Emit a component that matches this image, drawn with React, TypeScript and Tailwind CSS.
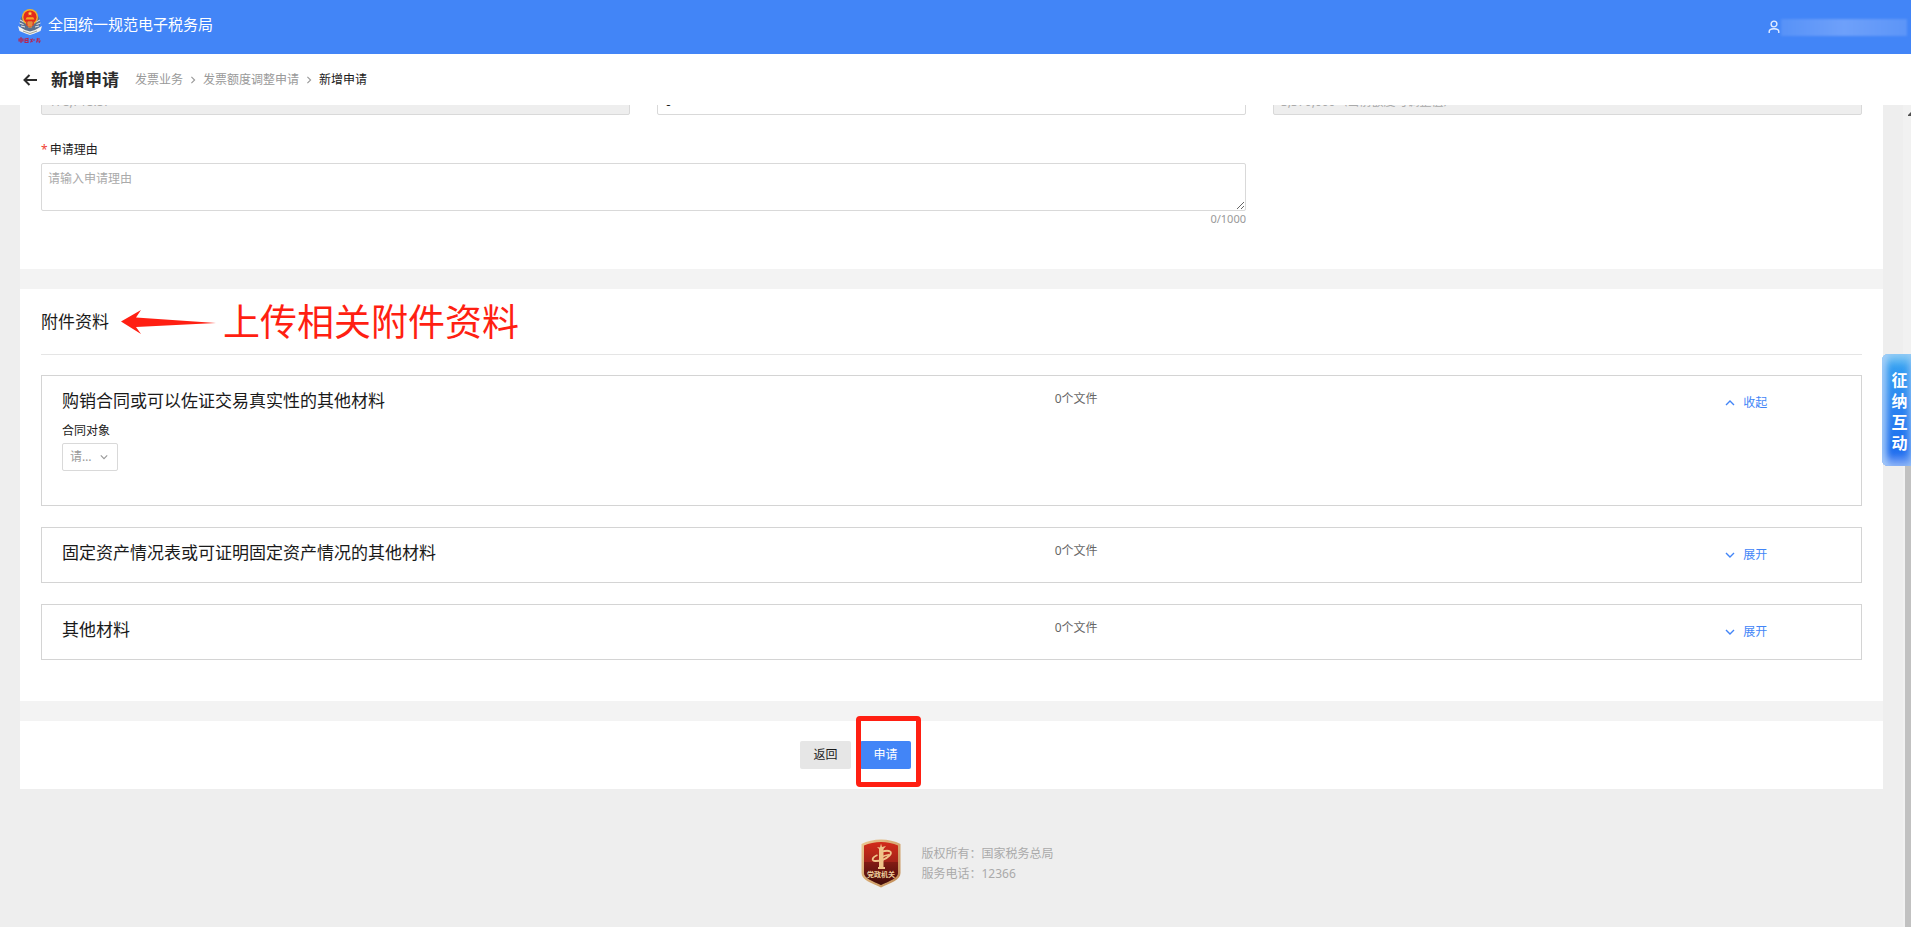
import { useState } from "react";
import type { ReactNode } from "react";

type Material = {
  id: string;
  title: string;
  files: number;
};

const MATERIALS: Material[] = [
  { id: "contract", title: "购销合同或可以佐证交易真实性的其他材料", files: 0 },
  { id: "assets", title: "固定资产情况表或可证明固定资产情况的其他材料", files: 0 },
  { id: "other", title: "其他材料", files: 0 },
];

function TaxEmblem() {
  return (
    <svg viewBox="0 0 26 36" className="h-9 w-[26px] shrink-0" aria-hidden="true">
      <path d="M5 8C1 14 3 20 8 24l5 2 5-2c5-4 7-10 3-16" fill="#5d6f8c" />
      <path d="M3 12l4 2M2.5 15l4 1.5M4 18l4 1M23 12l-4 2M23.5 15l-4 1.5M22 18l-4 1" stroke="#e4e6e8" />
      <circle cx="13" cy="9" r="8" fill="#f3b22c" />
      <circle cx="13" cy="9" r="6.6" fill="#e3291c" />
      <path d="M13 3.2l.7 1.5 1.6.1-1.2 1 .4 1.6-1.5-.9-1.5.9.4-1.6-1.2-1 1.6-.1z" fill="#ffd54a" />
      <path d="M8.5 11.5h9l-1.3-2.3H9.8z" fill="#f6a623" />
      <path d="M9 13h8v4l-4 3-4-3z" fill="#d8402a" />
      <path d="M10 15h6M10.5 17h5M12 13v7M14 13v7" stroke="#f4c04a" strokeWidth=".7" />
      <path d="M1 18l7 4 5 1.5 5-1.5 7-4-1.5 5-6 2.5L13 27l-4.5-1.5-6-2.5z" fill="#f3f2ee" />
      <path d="M6 23l7 2.5 7-2.5" fill="none" stroke="#8c8c7c" strokeWidth=".8" />
      <path
        d="M2 31h4v2H2zM4 29v6M8 31l3-.5v4H8zM8 32.5h3M13.5 31l2 3M15.5 30.5l-2 4M16 32h2M19.5 31H23M21 30l-1.5 4.5M20 33h3l-1 2"
        fill="none"
        stroke="#b52552"
        strokeWidth="1.1"
      />
    </svg>
  );
}

function AgencyBadge() {
  return (
    <svg viewBox="0 0 40 49" className="h-[49px] w-10 shrink-0" role="img" aria-label="党政机关">
      <defs>
        <linearGradient id="shield" x1="0" y1="0" x2="0" y2="1">
          <stop offset="0" stopColor="#d32b1a" />
          <stop offset=".45" stopColor="#a5241a" />
          <stop offset="1" stopColor="#3c0b0a" />
        </linearGradient>
        <linearGradient id="rim" x1="0" y1="0" x2="1" y2="1">
          <stop offset="0" stopColor="#ecc892" />
          <stop offset="1" stopColor="#c08a55" />
        </linearGradient>
      </defs>
      <path d="M20 .5C27 .7 34 2 39.5 5v29c0 7-10 10-19.5 14.5C10.500 44 .5 41 .5 34V5C6 2 13 .7 20 .5z" fill="url(#rim)" />
      <path d="M20 3c6 .1 12 1.2 17 3.5V34c0 5-8.500 8-17 12C11.500 42 3 39 3 34V6.500C8 4.200 14 3.100 20 3z" fill="url(#shield)" />
      <path d="M3 23h34v11c0 5-8.500 8-17 12C11.500 42 3 39 3 34z" fill="#4b0f0c" opacity=".35" />
      <path d="M18 10l-2-2 3 .5L20 4.500l1 3.500 4-1-2.500 3v18H24v2h-7v-2h1z" fill="#efc48a" />
      <path d="M21 12.500c8-2 11 .5 7.500 4-3 3-9 5.500-14 5.500-4.500 0-3.500-4 2-6" fill="none" stroke="#efc48a" strokeWidth="1.8" />
      <path d="M22 17.500c3-1.500 4-1 6-2" fill="none" stroke="#efc48a" strokeWidth="1.4" />
      <text x="20" y="38" textAnchor="middle" fontSize="7" fontWeight="700" fill="#efcf9e">
        党政机关
      </text>
    </svg>
  );
}

const CHEVRON_PATH = {
  up: "M1 7l4-4 4 4",
  down: "M1 3l4 4 4-4",
  right: "M3 1l4 4-4 4",
};

function Chevron({ dir, className }: { dir: keyof typeof CHEVRON_PATH; className: string }) {
  return (
    <svg viewBox="0 0 10 10" className={`shrink-0 ${className}`} fill="none" stroke="currentColor" strokeWidth="1.4" aria-hidden="true">
      <path d={CHEVRON_PATH[dir]} />
    </svg>
  );
}

function TopBar() {
  return (
    <header className="flex h-[54px] shrink-0 items-center justify-between bg-[#4285f7] pl-[17px] text-white">
      <div className="flex items-center gap-[5px] pb-[3px]">
        <TaxEmblem />
        <span className="pb-[3px] text-[15px] leading-5">全国统一规范电子税务局</span>
      </div>
      <div className="flex items-center gap-px pr-1">
        <svg viewBox="0 0 12 14" className="h-[14px] w-3" fill="none" stroke="#e3edff" strokeWidth="1.4" role="img" aria-label="用户">
          <circle cx="6" cy="4" r="2.9" />
          <path d="M1.200 13v-1.500C1.200 9.500 3 8.700 6 8.700s4.800.8 4.800 2.800V13" />
        </svg>
        <span className="h-[17px] w-[126px] bg-linear-to-r from-[#5792f8] via-[#6ea0fa] to-[#5c95f8] blur-[1px]" />
      </div>
    </header>
  );
}

function PageHeading() {
  return (
    <div className="flex h-[51px] shrink-0 items-center bg-white pt-px pl-[23px]">
      <button type="button" aria-label="返回上一页" className="text-[#2b2b2b]">
        <svg viewBox="0 0 14 12" className="h-3 w-[14px]" fill="none" stroke="currentColor" strokeWidth="2" aria-hidden="true">
          <path d="M6.500 1L1.500 6l5 5M1.500 6H14" />
        </svg>
      </button>
      <h1 className="ml-[14px] text-[17px] leading-6 font-bold text-[#2b2b2b]">新增申请</h1>
      <nav className="ml-4 flex items-center gap-[6px] text-xs text-[#999]">
        <a href="#invoice">发票业务</a>
        <Chevron dir="right" className="size-2" />
        <a href="#quota">发票额度调整申请</a>
        <Chevron dir="right" className="size-2" />
        <span className="text-[#1a1a1a]">新增申请</span>
      </nav>
    </div>
  );
}

function QuotaForm() {
  const [reason, setReason] = useState("");
  const field = "h-7 w-full rounded-[2px] border border-[#d9d9d9] px-[7px] text-xs";

  return (
    <section className="bg-white px-[21px] pb-[42px]">
      <div className="grid grid-cols-3 gap-x-[27px]">
        <input aria-label="当前额度" disabled defaultValue="178,718.87" className={`${field} bg-[#eee] text-[#aaa]`} />
        <input aria-label="申请额度" defaultValue="0" className={`${field} bg-white text-[#1a1a1a]`} />
        <input aria-label="调整后额度" disabled defaultValue="3,370,000（当前额度可调整值）" className={`${field} bg-[#eee] text-[#aaa]`} />
        <div className="col-span-2 pt-[25px]">
          <label htmlFor="reason" className="flex h-5 items-center gap-[2px] text-xs text-[#1a1a1a]">
            <span className="text-[#f04134]">*</span>
            申请理由
          </label>
          <textarea
            id="reason"
            value={reason}
            maxLength={1000}
            onChange={(e) => setReason(e.target.value)}
            placeholder="请输入申请理由"
            className="mt-[3px] block h-12 w-full rounded-[2px] border border-[#d9d9d9] px-[6px] py-[5px] text-xs leading-5 placeholder:text-[#aaa]"
          />
          <div className="text-right text-[11px] leading-4 text-[#999]">{reason.length}/1000</div>
        </div>
      </div>
    </section>
  );
}

type MaterialCardProps = {
  item: Material;
  open: boolean;
  onToggle: () => void;
  children?: ReactNode;
};

function MaterialCard({ item, open, onToggle, children }: MaterialCardProps) {
  return (
    <div className={`border border-[#d4d4d4] px-5 pt-[11px] ${open ? "pb-[34px]" : "pb-[11px]"}`}>
      <div className="flex items-start">
        <h3 className="w-[55.8%] text-[17px] leading-7 text-[#1a1a1a]">{item.title}</h3>
        <span className="w-[37.7%] text-xs leading-6 text-[#666]">{item.files}个文件</span>
        <button type="button" aria-expanded={open} onClick={onToggle} className="flex items-center gap-2 text-xs leading-8 whitespace-nowrap text-[#4285f7]">
          <Chevron dir={open ? "up" : "down"} className="size-[10px]" />
          {open ? "收起" : "展开"}
        </button>
      </div>
      {open && children}
    </div>
  );
}

function ContractTarget() {
  return (
    <div className="flex flex-col items-start">
      <label htmlFor="target" className="text-xs leading-6 text-[#1a1a1a]">
        合同对象
      </label>
      <div className="relative">
        <select id="target" className="h-7 w-14 appearance-none overflow-hidden rounded-[2px] border border-[#d9d9d9] bg-white pr-5 pl-[7px] text-xs text-ellipsis whitespace-nowrap text-[#999]">
          <option>请选择</option>
          <option>购方</option>
          <option>销方</option>
        </select>
        <Chevron dir="down" className="pointer-events-none absolute top-[10px] right-[10px] size-2 text-[#999]" />
      </div>
    </div>
  );
}

function Attachments() {
  const [openId, setOpenId] = useState<string | null>("contract");

  return (
    <section className="bg-white px-[21px] pb-[41px]">
      <div className="flex h-[66px] items-center border-b border-[#e5e5e5]">
        <h2 className="text-[17px] leading-6 text-[#1a1a1a]">附件资料</h2>
        <svg viewBox="0 0 95 24" className="ml-3 h-6 w-[95px] shrink-0" aria-hidden="true">
          <path d="M0 11.500L20 0l-5 7.500L95 13l-80 4 5 7z" fill="#ff1f12" />
        </svg>
        <span className="ml-[7px] text-[37px] leading-[48px] whitespace-nowrap text-[#ff1f12]">上传相关附件资料</span>
      </div>
      <div className="flex flex-col gap-[21px] pt-5">
        {MATERIALS.map((m) => (
          <MaterialCard key={m.id} item={m} open={openId === m.id} onToggle={() => setOpenId(openId === m.id ? null : m.id)}>
            <ContractTarget />
          </MaterialCard>
        ))}
      </div>
    </section>
  );
}

function Actions() {
  return (
    <section className="flex justify-center gap-[9px] bg-white py-5 pr-48">
      <button type="button" className="h-7 w-[51px] rounded-[2px] bg-[#e6e6e6] text-xs text-[#1a1a1a]">
        返回
      </button>
      <div className="relative">
        <button type="button" className="h-7 w-[51px] rounded-[2px] bg-[#4285f7] text-xs text-white">
          申请
        </button>
        <span className="pointer-events-none absolute -top-[25px] -right-[10px] -bottom-[18px] -left-1 rounded border-5 border-[#ff1f12]" />
      </div>
    </section>
  );
}

function InteractionTab() {
  return (
    <button
      type="button"
      className="absolute top-[354px] right-0 flex w-[29px] flex-col items-center rounded-l-md bg-linear-to-b from-[#35a5f2] via-[#2b82f0] to-[#1a66ee] pt-4 pb-3 pl-[6px] text-base leading-[21px] font-bold text-white shadow-[inset_5px_0_6px_rgba(175,210,250,0.7),inset_0_8px_8px_rgba(175,220,245,0.6),inset_0_-8px_8px_rgba(160,190,250,0.7)]"
    >
      {["征", "纳", "互", "动"].map((c) => (
        <span key={c}>{c}</span>
      ))}
    </button>
  );
}

export default function App() {
  return (
    <div className="relative flex h-screen flex-col overflow-hidden bg-[#eee] font-['Noto_Sans','Noto_Sans_CJK_SC',sans-serif]">
      <TopBar />
      <PageHeading />
      <div className="flex min-h-0 flex-1">
        <main className="min-w-0 flex-1 overflow-hidden px-5">
          <div className="-mt-[18px] flex flex-col gap-5 bg-[#f3f3f3]">
            <QuotaForm />
            <Attachments />
            <Actions />
          </div>
          <footer className="flex items-center justify-center gap-5 pt-[50px] pl-3 text-xs leading-5 text-[#aaa]">
            <AgencyBadge />
            <div>
              <p>版权所有：国家税务总局</p>
              <p>服务电话：12366</p>
            </div>
          </footer>
        </main>
        <div className="flex w-2 flex-col items-end overflow-hidden bg-[#f1f1f1]" aria-hidden="true">
          <svg viewBox="0 0 3 4" className="mt-[7px] h-1 w-[3px]">
            <path d="M0 3l3-3v4H0z" fill="#505050" />
          </svg>
          <div className="mt-72 w-[6px] flex-1 bg-[#c1c1c1]" />
        </div>
      </div>
      <InteractionTab />
    </div>
  );
}
